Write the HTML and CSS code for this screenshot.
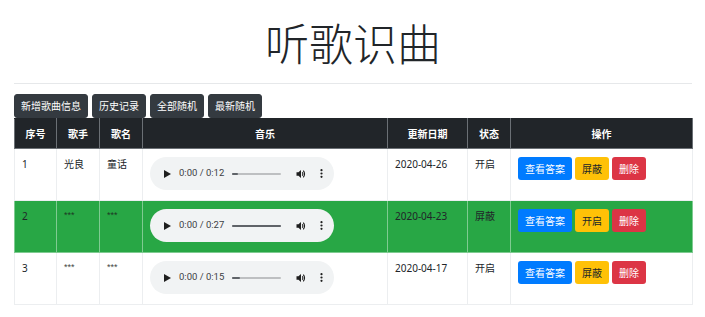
FILE: index.html
```html
<!DOCTYPE html>
<html lang="zh">
<head>
<meta charset="utf-8">
<title>听歌识曲</title>
<link rel="stylesheet" href="styles.css">
</head>
<body>
<div class="page">
  <h1 class="title">听歌识曲</h1>
  <hr class="rule">
  <div class="toolbar">
    <button class="tbtn">新增歌曲信息</button>
    <button class="tbtn">历史记录</button>
    <button class="tbtn">全部随机</button>
    <button class="tbtn">最新随机</button>
  </div>
  <table class="songs">
    <colgroup>
      <col class="c-no"><col class="c-singer"><col class="c-name"><col class="c-music"><col class="c-date"><col class="c-state"><col class="c-ops">
    </colgroup>
    <thead>
      <tr><th>序号</th><th>歌手</th><th>歌名</th><th>音乐</th><th>更新日期</th><th>状态</th><th>操作</th></tr>
    </thead>
    <tbody>
      <tr>
        <td>1</td><td>光良</td><td>童话</td>
        <td>
          <div class="player">
            <svg class="play" width="7" height="8" viewBox="0 0 7 8"><path d="M0 0 L7 4 L0 8 Z" fill="#1f1f1f"/></svg>
            <span class="time">0:00 / 0:12</span>
            <span class="track"><span class="fill" style="width:6px"></span></span>
            <svg class="vol" width="10" height="10" viewBox="0 0 10 10"><path d="M0.5 3.3 H2.5 L5 1 V9 L2.5 6.7 H0.5 Z" fill="#1f1f1f"/><path d="M6.3 3.2 Q7.6 5 6.3 6.8" stroke="#1f1f1f" stroke-width="1.1" fill="none"/><path d="M7.3 1.6 Q9.8 5 7.3 8.4" stroke="#1f1f1f" stroke-width="1.1" fill="none"/></svg>
            <svg class="dots" width="3" height="9" viewBox="0 0 3 9"><circle cx="1.5" cy="1.2" r="1.1" fill="#1f1f1f"/><circle cx="1.5" cy="4.5" r="1.1" fill="#1f1f1f"/><circle cx="1.5" cy="7.8" r="1.1" fill="#1f1f1f"/></svg>
          </div>
        </td>
        <td>2020-04-26</td><td>开启</td>
        <td><div class="ops"><button class="obtn blue">查看答案</button><button class="obtn yellow">屏蔽</button><button class="obtn red">删除</button></div></td>
      </tr>
      <tr class="green">
        <td>2</td><td class="mask">***</td><td class="mask">***</td>
        <td>
          <div class="player">
            <svg class="play" width="7" height="8" viewBox="0 0 7 8"><path d="M0 0 L7 4 L0 8 Z" fill="#1f1f1f"/></svg>
            <span class="time">0:00 / 0:27</span>
            <span class="track"><span class="fill" style="width:49px"></span></span>
            <svg class="vol" width="10" height="10" viewBox="0 0 10 10"><path d="M0.5 3.3 H2.5 L5 1 V9 L2.5 6.7 H0.5 Z" fill="#1f1f1f"/><path d="M6.3 3.2 Q7.6 5 6.3 6.8" stroke="#1f1f1f" stroke-width="1.1" fill="none"/><path d="M7.3 1.6 Q9.8 5 7.3 8.4" stroke="#1f1f1f" stroke-width="1.1" fill="none"/></svg>
            <svg class="dots" width="3" height="9" viewBox="0 0 3 9"><circle cx="1.5" cy="1.2" r="1.1" fill="#1f1f1f"/><circle cx="1.5" cy="4.5" r="1.1" fill="#1f1f1f"/><circle cx="1.5" cy="7.8" r="1.1" fill="#1f1f1f"/></svg>
          </div>
        </td>
        <td>2020-04-23</td><td>屏蔽</td>
        <td><div class="ops"><button class="obtn blue">查看答案</button><button class="obtn yellow">开启</button><button class="obtn red">删除</button></div></td>
      </tr>
      <tr>
        <td>3</td><td class="mask">***</td><td class="mask">***</td>
        <td>
          <div class="player">
            <svg class="play" width="7" height="8" viewBox="0 0 7 8"><path d="M0 0 L7 4 L0 8 Z" fill="#1f1f1f"/></svg>
            <span class="time">0:00 / 0:15</span>
            <span class="track"><span class="fill" style="width:8px"></span></span>
            <svg class="vol" width="10" height="10" viewBox="0 0 10 10"><path d="M0.5 3.3 H2.5 L5 1 V9 L2.5 6.7 H0.5 Z" fill="#1f1f1f"/><path d="M6.3 3.2 Q7.6 5 6.3 6.8" stroke="#1f1f1f" stroke-width="1.1" fill="none"/><path d="M7.3 1.6 Q9.8 5 7.3 8.4" stroke="#1f1f1f" stroke-width="1.1" fill="none"/></svg>
            <svg class="dots" width="3" height="9" viewBox="0 0 3 9"><circle cx="1.5" cy="1.2" r="1.1" fill="#1f1f1f"/><circle cx="1.5" cy="4.5" r="1.1" fill="#1f1f1f"/><circle cx="1.5" cy="7.8" r="1.1" fill="#1f1f1f"/></svg>
          </div>
        </td>
        <td>2020-04-17</td><td>开启</td>
        <td><div class="ops"><button class="obtn blue">查看答案</button><button class="obtn yellow">屏蔽</button><button class="obtn red">删除</button></div></td>
      </tr>
    </tbody>
  </table>
</div>
</body>
</html>
```

FILE: styles.css
```css
* { box-sizing: border-box; }

body {
  margin: 0;
  background: #fff;
  color: #212529;
  font-family: "Noto Sans", "Noto Sans CJK SC", sans-serif;
  font-size: 10px;
  line-height: 1.5;
}

.page {
  width: 678px;
  margin-left: 14px;
}

.title {
  margin: 16px 0 0;
  font-family: "Noto Sans CJK SC", sans-serif;
  font-size: 44px;
  font-weight: 300;
  line-height: 52px;
  text-align: center;
  color: #212529;
}

.rule {
  margin: 15px 0 0;
  border: 0;
  border-top: 1px solid #e6e8ea;
  height: 0;
}

.toolbar {
  display: flex;
  gap: 4px;
  margin-top: 10px;
}

.tbtn {
  height: 24px;
  padding: 0 6px;
  border: 1px solid #343a40;
  border-radius: 3px;
  background: #343a40;
  color: #fff;
  font-family: "Noto Sans CJK SC", sans-serif;
  font-size: 10px;
  line-height: 22px;
}

.songs {
  width: 678px;
  border-collapse: collapse;
  table-layout: fixed;
}

.c-no { width: 42px; }
.c-singer { width: 43px; }
.c-name { width: 43px; }
.c-music { width: 245px; }
.c-date { width: 80px; }
.c-state { width: 43px; }
.c-ops { width: 182px; }

.songs th {
  height: 30px;
  padding: 0 6px;
  background: #212529;
  color: #fff;
  font-family: "Noto Sans CJK SC", sans-serif;
  font-weight: 700;
  font-size: 10px;
  text-align: center;
  vertical-align: middle;
  border: 1px solid #6b7075;
  border-top-color: #212529;
}

.songs td {
  height: 52px;
  padding: 8px 7px 0;
  vertical-align: top;
  border: 1px solid #eceef0;
  font-family: "Noto Sans", "Noto Sans CJK SC", sans-serif;
}

.songs td.mask {
  font-family: "Liberation Sans", sans-serif;
  font-size: 9px;
  color: #444;
}

.green td {
  background: #28a745;
  border-color: #7fcb91;
}

.green td.mask { color: #1d3a24; }

.player {
  display: flex;
  align-items: center;
  width: 184px;
  height: 33px;
  padding-left: 14px;
  border-radius: 17px;
  background: #f1f3f4;
}

.play { flex: none; }

.time {
  margin-left: 8px;
  font-family: Roboto, "Noto Sans", sans-serif;
  font-size: 9.5px;
  color: #3c4043;
  white-space: nowrap;
}

.track {
  flex: none;
  width: 49px;
  height: 2px;
  margin-left: 8px;
  background: #bdbfc1;
  border-radius: 1px;
}

.fill {
  display: block;
  height: 2px;
  background: #5f6368;
  border-radius: 1px;
}

.vol {
  flex: none;
  margin-left: 15px;
}

.dots {
  flex: none;
  margin-left: 14px;
}

.ops {
  display: flex;
  gap: 3px;
}

.obtn {
  height: 23px;
  padding: 0 6px;
  border: 1px solid transparent;
  border-radius: 3px;
  font-family: "Noto Sans CJK SC", sans-serif;
  font-size: 10px;
  line-height: 21px;
}

.blue { background: #007bff; color: #fff; }
.yellow { background: #ffc107; color: #212529; }
.red { background: #dc3545; color: #fff; }
```
